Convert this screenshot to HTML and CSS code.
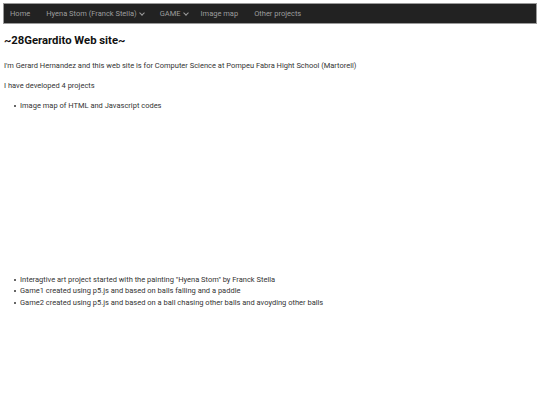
FILE: index.html
```html
<!DOCTYPE html>
<html>
<head>
<meta charset="utf-8">
<link rel="stylesheet" href="styles.css">
</head>
<body>
<nav class="navbar">
  <a class="nav-item" href="#">Home</a>
  <a class="nav-item" href="#">Hyena Stom (Franck Stella) <span class="caret"></span></a>
  <a class="nav-item nav-tight" href="#">GAME <span class="caret"></span></a>
  <a class="nav-item" href="#">Image map</a>
  <a class="nav-item" href="#">Other projects</a>
</nav>
<main class="content">
  <h1 class="title">~28Gerardito Web site~</h1>
  <p class="para">I'm Gerard Hernandez and this web site is for Computer Science at Pompeu Fabra Hight School (Martorell)</p>
  <p class="para">I have developed 4 projects</p>
  <ul class="list">
    <li class="item">Image map of HTML and Javascript codes<div class="map-space"></div></li>
    <li class="item">Interagtive art project started with the painting "Hyena Stom" by Franck Stella</li>
    <li class="item">Game1 created using p5.js and based on balls falling and a paddle</li>
    <li class="item">Game2 created using p5.js and based on a ball chasing other balls and avoyding other balls</li>
  </ul>
</main>
</body>
</html>
```
FILE: styles.css
```css
html, body {
  margin: 0;
  padding: 0;
  background: #fff;
}
body {
  font-family: Roboto, "Liberation Sans", sans-serif;
  color: #333;
  padding: 3px 3px 0 3px;
}
.navbar {
  display: flex;
  align-items: center;
  height: 19px;
  background: #222;
  border: 1px solid #9a9a9a;
  padding: 0 0 0 1px;
}
.nav-item {
  color: #9d9d9d;
  text-decoration: none;
  font-size: 7.5px;
  padding: 0 8px 0 5px;
  display: flex;
  align-items: center;
  margin-right: 3px;
}
.nav-tight {
  margin-right: 0;
}
.caret {
  display: inline-block;
  width: 3px;
  height: 3px;
  border-right: 1px solid #9d9d9d;
  border-bottom: 1px solid #9d9d9d;
  transform: rotate(45deg);
  margin: -2px 0 0 3px;
}
.content {
  padding: 0 1px;
}
.title {
  font-size: 11.3px;
  font-weight: bold;
  margin: 10px 0 13px;
  color: #111;
}
.para {
  font-size: 7.5px;
  margin: 0 0 9px;
  line-height: 11px;
}
.list {
  font-size: 7.5px;
  line-height: 11.5px;
  margin: 0;
  padding-left: 16px;
  list-style: none;
}
.item {
  position: relative;
}
.item::before {
  content: "";
  position: absolute;
  left: -6px;
  top: 5px;
  width: 2px;
  height: 2px;
  border-radius: 50%;
  background: #333;
}
.map-space {
  height: 162px;
}
```
